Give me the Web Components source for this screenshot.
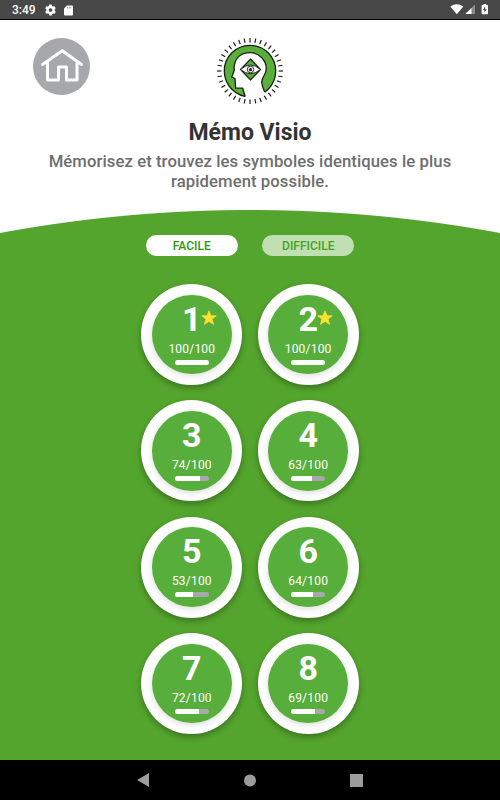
<!DOCTYPE html>
<html lang="fr">
<head>
<meta charset="utf-8">
<title>Mémo Visio</title>
<style>
  body {
    margin: 0;
    height: 800px;
    display: flex;
    flex-direction: column;
    overflow: hidden;
    background: #000;
    font-family: Roboto, "Liberation Sans", sans-serif;
  }

  game-screen {
    flex: 1;
  }
</style>
</head>
<body>
<status-bar time="3:49"></status-bar>
<game-screen>
  <home-button slot="home"></home-button>
  <visio-logo slot="logo"></visio-logo>
  <span slot="title">Mémo Visio</span>
  <span slot="description">Mémorisez et trouvez les symboles identiques le plus rapidement possible.</span>
  <level-tab slot="tabs" active>FACILE</level-tab>
  <level-tab slot="tabs">DIFFICILE</level-tab>
  <level-badge level="1" score="100"></level-badge>
  <level-badge level="2" score="100"></level-badge>
  <level-badge level="3" score="74"></level-badge>
  <level-badge level="4" score="63"></level-badge>
  <level-badge level="5" score="53"></level-badge>
  <level-badge level="6" score="64"></level-badge>
  <level-badge level="7" score="72"></level-badge>
  <level-badge level="8" score="69"></level-badge>
</game-screen>
<nav-bar></nav-bar>

<script>
class StatusBar extends HTMLElement {
  constructor() {
    super();
    this.attachShadow({ mode: 'open' });
    this.shadowRoot.innerHTML = `
      <style>
        :host {
          display: flex;
          align-items: center;
          box-sizing: border-box;
          height: 20px;
          padding: 0 11px 0 12px;
          background: #484848;
          border-bottom: 1px solid #000;
          color: #fff;
          font-size: 12px;
          line-height: 19px;
          font-weight: 500;
        }
        svg { display: block; }
        .time { width: 33px; padding-top: 1px; }
        .icons { flex: 1; display: flex; align-items: center; gap: 8px; padding-top: 1px; }
      </style>
      <span class="time">${this.getAttribute('time')}</span>
      <div class="icons">
        <svg width="11" height="12" viewBox="0 0 22 22">
          <path fill="#fff" fill-rule="evenodd" d="M8.500 0h5l.7 3 2 1.200 2.900-.9 2.500 4.300-2.200 2.100v2.600l2.200 2.100-2.500 4.300-2.900-.9-2 1.200-.7 3h-5l-.7-3-2-1.200-2.900.9L.4 14.400l2.200-2.100V9.700L.4 7.600l2.500-4.300 2.900.9 2-1.200zM11 7.300a3.700 3.700 0 1 0 0 7.400 3.700 3.700 0 0 0 0-7.400z"/>
        </svg>
        <svg width="9" height="11" viewBox="0 0 9 11">
          <path fill="#fff" d="M3 .5h5q1 0 1 1v8q0 1-1 1H1q-1 0-1-1v-6z"/>
          <path stroke="#777" stroke-width=".7" d="M3.500 1.700v1.800M5.200 1.700v1.800M6.900 1.700v1.800"/>
        </svg>
      </div>
      <svg width="39" height="12" viewBox="450 4 39 12">
        <path fill="#fff" d="M450.300 6.600Q456.800 1.900 463.300 6.600L456.800 14.300z"/>
        <path fill="#8b8b8b" d="M475 4.500V14h-9.700z"/>
        <path fill="#fff" d="M471.500 8v6h-6.200z"/>
        <path fill="#fff" d="M483.500 4h2.600v1h1.200q.7 0 .7.700v7.700q0 .8-.7.800h-5q-.7 0-.7-.8V5.700q0-.7.700-.7h1.200z"/>
        <path fill="#484848" d="M485.200 6.500l-2.300 3.500h1.500v2.800l2.300-3.600h-1.500z"/>
      </svg>`;
  }
}
window.customElements.define('status-bar', StatusBar);

class HomeButton extends HTMLElement {
  constructor() {
    super();
    this.attachShadow({ mode: 'open' });
    this.shadowRoot.innerHTML = `
      <style>
        :host { display: block; width: 57px; height: 57px; }
        svg { display: block; }
      </style>
      <svg width="57" height="57" viewBox="0 0 57 57" role="img" aria-label="Accueil">
        <circle cx="28.500" cy="28.500" r="28.500" fill="#a7a8ac"/>
        <path fill="none" stroke="#fff" stroke-width="3" stroke-linecap="round" stroke-linejoin="round"
          d="M9.600 26.500L29.200 12.700 48.500 26.500M14.500 24v18h11V29h8v13h10.500V24"/>
      </svg>`;
  }
}
window.customElements.define('home-button', HomeButton);

class VisioLogo extends HTMLElement {
  constructor() {
    super();
    const rays = 36;
    const lines = Array.from({ length: rays }, (_, i) =>
      `<path d="M0 -33V-28.600" transform="rotate(${i * 360 / rays})"/>`).join('');

    this.attachShadow({ mode: 'open' });
    this.shadowRoot.innerHTML = `
      <style>
        :host { display: block; width: 68px; height: 68px; }
        svg { display: block; }
      </style>
      <svg width="68" height="68" viewBox="-34 -34 68 68">
        <circle r="25.700" fill="#5aaf3a" stroke="#14200f" stroke-width="1.300"/>
        <path fill="#fff" d="M-4.800 27.500V25.500L-7.300 17.200H-14.400L-15 7.500L-18.200 6.200L-15.500-1.500Q-16.400-4-15.600-6C-14-14-8-18.300 0-18.300C9-18.300 16.300-11 16.300-2.500C16.300 4 11.500 6 11.700 11.500Q12.300 16 14.700 21L16 24L8 30z"/>
        <path fill="none" stroke="#14200f" stroke-width="1.300" stroke-linejoin="round" d="M-4.800 25.500L-7.300 17.200H-14.400L-15 7.500L-18.200 6.200L-15.500-1.500Q-16.400-4-15.600-6C-14-14-8-18.300 0-18.300C9-18.300 16.300-11 16.300-2.500C16.300 4 11.500 6 11.700 11.500Q12.300 16 14.700 21"/>
        <g stroke="#1b1b1b" stroke-width="1.200">${lines}</g>
        <path fill="#5aaf3a" stroke="#14200f" stroke-width="1.200" d="M.5-12L10.500-1.500.5 9-9.500-1.500z"/>
        <path fill="#fff" stroke="#14200f" d="M-9.500-1.500Q.5-10.500 10.500-1.500Q.5 7-9.500-1.500z"/>
        <circle cx=".5" cy="-1.500" r="3.200" fill="#fff" stroke="#222"/>
        <circle cx=".5" cy="-1.300" r="1.600" fill="#222"/>
      </svg>`;
  }
}
window.customElements.define('visio-logo', VisioLogo);

class LevelTab extends HTMLElement {
  constructor() {
    super();
    this.attachShadow({ mode: 'open' });
    this.shadowRoot.innerHTML = `
      <style>
        :host {
          display: block;
          width: 92px;
          height: 21px;
          border-radius: 11px;
          background: #c0dfb3;
          color: #45a41c;
          font-size: 12px;
          font-weight: 500;
          line-height: 22px;
          text-align: center;
        }
        :host([active]) { background: #fff; color: #2a9a0c; }
      </style>
      <slot></slot>`;
  }
}
window.customElements.define('level-tab', LevelTab);

class LevelBadge extends HTMLElement {
  constructor() {
    super();
    const score = Number(this.getAttribute('score'));

    this.attachShadow({ mode: 'open' });
    this.shadowRoot.innerHTML = `
      <style>
        :host {
          display: block;
          box-sizing: border-box;
          width: 101px;
          height: 101px;
          padding: 10.800px;
          border-radius: 50%;
          background: #fff;
          box-shadow: 0 3px 6px rgba(0, 0, 0, .3);
        }
        .disc {
          display: flex;
          flex-direction: column;
          align-items: center;
          position: relative;
          height: 100%;
          border-radius: 50%;
          background: #58ae3a;
          box-shadow: 0 2px 6px rgba(0, 0, 0, .14);
          color: #fff;
        }
        .level {
          margin-top: 4px;
          font-size: 34px;
          line-height: 40px;
          font-weight: 700;
        }
        .score {
          margin-top: 2px;
          font-size: 12px;
          line-height: 16px;
          letter-spacing: .2px;
        }
        .bar {
          margin-top: 3px;
          width: 33.500px;
          height: 5px;
          border-radius: 2.500px;
          overflow: hidden;
          background: #a7a8ac;
        }
        .fill { height: 100%; background: #fff; }
        .star { position: absolute; left: 49px; top: 15px; }
      </style>
      <div class="disc">
        <span class="level">${this.getAttribute('level')}</span>
        <span class="score">${score}/100</span>
        <div class="bar"><div class="fill" style="width: ${score}%"></div></div>
        ${score === 100 ? this._starTemplate() : ''}
      </div>`;
  }

  _starTemplate() {
    return `<svg class="star" width="16" height="16" viewBox="0 0 16 16">
      <path fill="#fde030" stroke="#fde030" stroke-width=".8" stroke-linejoin="round" d="M8 .8l2 5h5.200l-4.200 3.400 1.600 5.200L8 11.300l-4.600 3.100L5 9.200.8 5.800H6z"/>
    </svg>`;
  }
}
window.customElements.define('level-badge', LevelBadge);

class GameScreen extends HTMLElement {
  constructor() {
    super();
    this.attachShadow({ mode: 'open' });
    this.shadowRoot.innerHTML = `
      <style>
        :host {
          display: flex;
          flex-direction: column;
          align-items: center;
          background: radial-gradient(circle at 250px 1561px, #54a52d 1370.500px, #fff 1371.500px);
        }
        header {
          display: grid;
          grid-template-columns: 1fr 68px 1fr;
          width: 100%;
          box-sizing: border-box;
          padding: 17px 33px 0;
        }
        .home { padding-top: 1px; }
        h1 {
          margin: 14px 0 0;
          color: #333;
          font-size: 23px;
          font-weight: 700;
          line-height: 28px;
        }
        p {
          margin: 5px 0 0;
          width: 430px;
          color: #6e6e6e;
          font-size: 16.700px;
          font-weight: 500;
          line-height: 20px;
          letter-spacing: .07px;
          text-align: center;
        }
        .tabs { display: flex; gap: 24.500px; margin-top: 43px; }
        .levels {
          display: grid;
          grid-template-columns: auto auto;
          gap: 15.300px;
          margin-top: 28px;
        }
      </style>
      <header>
        <div class="home"><slot name="home"></slot></div>
        <slot name="logo"></slot>
      </header>
      <h1><slot name="title"></slot></h1>
      <p><slot name="description"></slot></p>
      <div class="tabs"><slot name="tabs"></slot></div>
      <div class="levels"><slot></slot></div>`;
  }
}
window.customElements.define('game-screen', GameScreen);

class NavBar extends HTMLElement {
  constructor() {
    super();
    this.attachShadow({ mode: 'open' });
    this.shadowRoot.innerHTML = `
      <style>
        :host {
          display: flex;
          align-items: center;
          justify-content: space-between;
          box-sizing: border-box;
          height: 40px;
          padding: 0 137px;
          background: #000;
        }
        svg { display: block; fill: #9c9c9c; }
      </style>
      <svg width="12" height="14" viewBox="0 0 12 14"><path d="M0 7L12 0v14z"/></svg>
      <svg width="13" height="13" viewBox="0 0 13 13"><circle cx="7" cy="6.500" r="6"/></svg>
      <svg width="13" height="13" viewBox="0 0 13 13"><rect width="13" height="13" rx=".6"/></svg>`;
  }
}
window.customElements.define('nav-bar', NavBar);
</script>
</body>
</html>
